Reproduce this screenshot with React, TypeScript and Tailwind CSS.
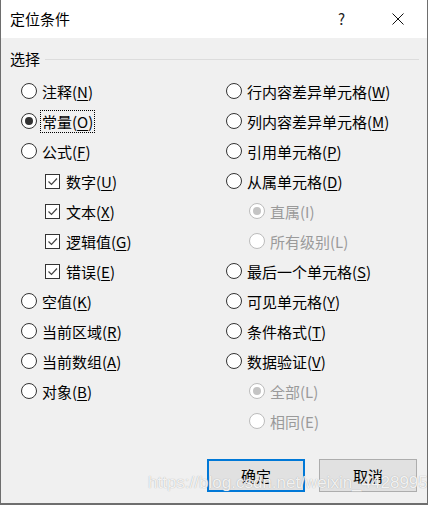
import React from 'react';

type Opt = {
  label: string;
  key?: string;
  kind: 'radio' | 'check';
  indent?: boolean;
  checked?: boolean;
  disabled?: boolean;
  focused?: boolean;
};

const leftOptions: Opt[] = [
  { label: '注释', key: 'N', kind: 'radio' },
  { label: '常量', key: 'O', kind: 'radio', checked: true, focused: true },
  { label: '公式', key: 'F', kind: 'radio' },
  { label: '数字', key: 'U', kind: 'check', indent: true, checked: true },
  { label: '文本', key: 'X', kind: 'check', indent: true, checked: true },
  { label: '逻辑值', key: 'G', kind: 'check', indent: true, checked: true },
  { label: '错误', key: 'E', kind: 'check', indent: true, checked: true },
  { label: '空值', key: 'K', kind: 'radio' },
  { label: '当前区域', key: 'R', kind: 'radio' },
  { label: '当前数组', key: 'A', kind: 'radio' },
  { label: '对象', key: 'B', kind: 'radio' },
];

const rightOptions: Opt[] = [
  { label: '行内容差异单元格', key: 'W', kind: 'radio' },
  { label: '列内容差异单元格', key: 'M', kind: 'radio' },
  { label: '引用单元格', key: 'P', kind: 'radio' },
  { label: '从属单元格', key: 'D', kind: 'radio' },
  { label: '直属(I)', kind: 'radio', indent: true, checked: true, disabled: true },
  { label: '所有级别(L)', kind: 'radio', indent: true, disabled: true },
  { label: '最后一个单元格', key: 'S', kind: 'radio' },
  { label: '可见单元格', key: 'Y', kind: 'radio' },
  { label: '条件格式', key: 'T', kind: 'radio' },
  { label: '数据验证', key: 'V', kind: 'radio' },
  { label: '全部(L)', kind: 'radio', indent: true, checked: true, disabled: true },
  { label: '相同(E)', kind: 'radio', indent: true, disabled: true },
];

const Radio = ({ checked, disabled }: { checked?: boolean; disabled?: boolean }) => (
  <div
    className={`w-[16px] h-[16px] rounded-full border bg-white flex items-center justify-center shrink-0 ${
      disabled ? 'border-[#bcbcbc]' : 'border-[#333333]'
    }`}
  >
    {checked && (
      <div className={`w-[8px] h-[8px] rounded-full ${disabled ? 'bg-[#c4c4c4]' : 'bg-[#333333]'}`} />
    )}
  </div>
);

const Check = ({ checked }: { checked?: boolean }) => (
  <div className="w-[15px] h-[15px] border border-[#333333] bg-white shrink-0 flex items-center justify-center">
    {checked && (
      <svg width="13" height="13" viewBox="0 0 13 13">
        <polyline points="2.5,6.5 5.5,9.5 11,3.5" fill="none" stroke="#444444" strokeWidth="1.2" />
      </svg>
    )}
  </div>
);

const Row = ({ o }: { o: Opt }) => (
  <div className={`h-[30px] flex items-center ${o.indent ? 'ml-[23px]' : ''}`}>
    {o.kind === 'radio' ? (
      <Radio checked={o.checked} disabled={o.disabled} />
    ) : (
      <div className="ml-px mr-px">
        <Check checked={o.checked} />
      </div>
    )}
    <span
      className={`ml-[3px] px-px leading-[21px] border ${
        o.focused ? 'border-dotted border-black' : 'border-transparent'
      } ${o.disabled ? 'text-[#9a9a9a]' : 'text-black'}`}
    >
      {o.label}
      {o.key && (
        <>
          (<span className="underline underline-offset-2 decoration-1">{o.key}</span>)
        </>
      )}
    </span>
  </div>
);

const App: React.FC = () => {
  return (
    <div className="relative w-[428px] h-[505px] flex flex-col bg-[#f0f0f0] border-x border-b-2 border-[#6e6e6e] text-[15px] font-['Noto_Sans_CJK_SC',sans-serif] text-black overflow-hidden">
      {/* Title bar */}
      <div className="h-[38px] bg-white flex items-center pl-[9px] shrink-0">
        <span className="leading-[20px]">定位条件</span>
        <span className="ml-auto text-[15px] leading-[20px] text-[#222]">?</span>
        <svg className="ml-[47px] mr-[23px]" width="12" height="12" viewBox="0 0 12 12">
          <path d="M0.5 0.5 L11.5 11.5 M11.5 0.5 L0.5 11.5" stroke="#111111" strokeWidth="1" />
        </svg>
      </div>

      {/* Group header */}
      <div className="flex items-center h-[20px] mt-[11px] pl-[9px] pr-[8px]">
        <span className="leading-[20px]">选择</span>
        <div className="flex-1 h-px bg-[#dcdcdc] ml-[5px]" />
      </div>

      {/* Options */}
      <div className="flex mt-[7px]">
        <div className="w-[225px] pl-[20px] flex flex-col">
          {leftOptions.map((o) => (
            <Row key={o.label} o={o} />
          ))}
        </div>
        <div className="flex flex-col">
          {rightOptions.map((o) => (
            <Row key={o.label} o={o} />
          ))}
        </div>
      </div>

      {/* Buttons */}
      <div className="flex justify-end gap-[14px] mt-[23px] pr-[10px]">
        <button className="w-[98px] h-[33px] bg-[#e1e1e1] border-2 border-[#0078d7] flex items-center justify-center leading-[20px]">
          确定
        </button>
        <button className="w-[98px] h-[33px] bg-[#e1e1e1] border border-[#adadad] flex items-center justify-center leading-[20px]">
          取消
        </button>
      </div>

      {/* Watermark */}
      <div className="absolute left-[147px] top-[472px] text-[17px] leading-[22px] font-['Liberation_Sans',sans-serif] text-white/85 [text-shadow:0_0_1px_#9a9a9a] pointer-events-none whitespace-nowrap">
        https://blog.csdn.net/weixin_44289959
      </div>
    </div>
  );
};

export default App;
